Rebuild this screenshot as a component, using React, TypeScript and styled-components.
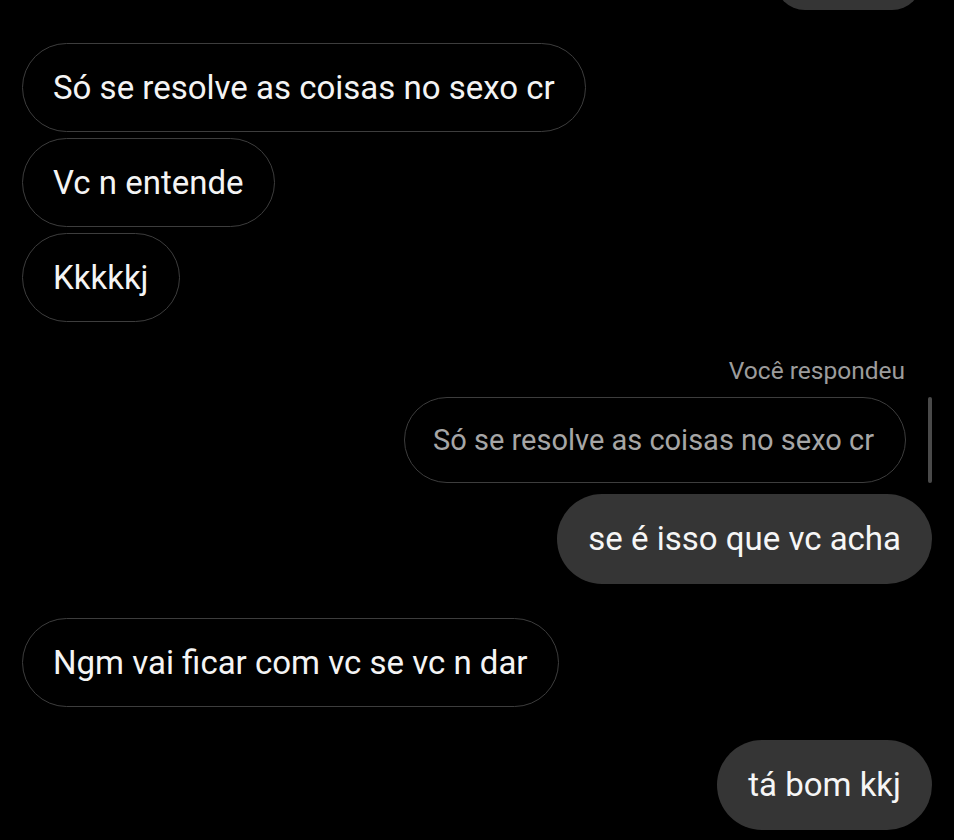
import styled, { createGlobalStyle } from "styled-components";

const GlobalStyle = createGlobalStyle`
  html, body {
    margin: 0;
    padding: 0;
    background: #000;
  }
  body {
    font-family: Roboto, "Noto Sans", "Liberation Sans", sans-serif;
    -webkit-font-smoothing: antialiased;
  }
`

type Side = "left" | "right"

const Screen = styled.div`
  width: 954px;
  height: 840px;
  overflow: hidden;
  background: #000;
`
const Thread = styled.div`
  display: flex;
  flex-direction: column;
  padding: 0 22px;
`
const Row = styled.div<{ $side: Side; $space: number }>`
  display: flex;
  justify-content: ${(p) => (p.$side === "right" ? "flex-end" : "flex-start")};
  align-items: stretch;
  margin-top: ${(p) => p.$space}px;
`
const Received = styled.div`
  border: 1px solid #3d3d3d;
  border-radius: 45px;
  padding: 24px 30px;
  font-size: 33px;
  line-height: 39px;
  color: #f4f4f4;
  white-space: nowrap;
`
const Sent = styled.div`
  background: #353535;
  border-radius: 45px;
  padding: 25px 31px;
  font-size: 33px;
  line-height: 40px;
  color: #f6f6f6;
  white-space: nowrap;
`
const CutOff = styled(Sent)`
  width: 147px;
  height: 60px;
  padding: 0;
  margin-top: -50px;
  margin-right: 10px;
  border-radius: 30px;
`
const ReplyLabel = styled.div`
  font-size: 24.5px;
  line-height: 28px;
  color: #9c9c9c;
  margin-right: 27px;
`
const Quote = styled.div`
  border: 1px solid #3d3d3d;
  border-radius: 43px;
  padding: 25px 31px 25px 28px;
  font-size: 29px;
  line-height: 34px;
  color: #a6a6a6;
  white-space: nowrap;
`
const QuoteBar = styled.div`
  width: 4px;
  margin-left: 22px;
  border-radius: 2px;
  background: #4a4a4a;
`

export default function App() {
  return (
    <Screen>
      <GlobalStyle />
      <Thread>
        <Row $side="right" $space={0}>
          <CutOff />
        </Row>
        <Row $side="left" $space={33}>
          <Received>Só se resolve as coisas no sexo cr</Received>
        </Row>
        <Row $side="left" $space={6}>
          <Received>Vc n entende</Received>
        </Row>
        <Row $side="left" $space={6}>
          <Received>Kkkkkj</Received>
        </Row>
        <Row $side="right" $space={35}>
          <ReplyLabel>Você respondeu</ReplyLabel>
        </Row>
        <Row $side="right" $space={12}>
          <Quote>Só se resolve as coisas no sexo cr</Quote>
          <QuoteBar />
        </Row>
        <Row $side="right" $space={11}>
          <Sent>se é isso que vc acha</Sent>
        </Row>
        <Row $side="left" $space={34}>
          <Received>Ngm vai ficar com vc se vc n dar</Received>
        </Row>
        <Row $side="right" $space={33}>
          <Sent>tá bom kkj</Sent>
        </Row>
      </Thread>
    </Screen>
  )
}
